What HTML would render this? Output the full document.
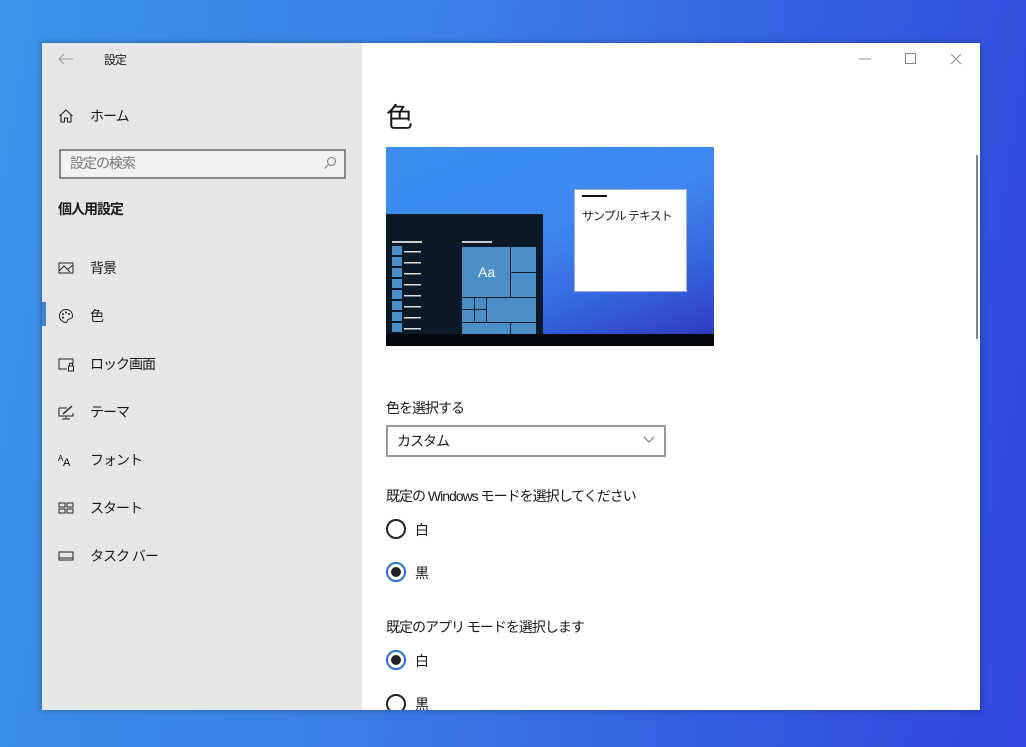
<!DOCTYPE html>
<html><head><meta charset="utf-8"><style>
*{margin:0;padding:0;box-sizing:border-box}
body{width:1026px;height:747px;overflow:hidden;position:relative;font-family:"Liberation Sans","Noto Sans CJK JP",sans-serif;color:#000;
background:linear-gradient(100deg,#3d93ea 0%,#3a80e6 40%,#3560e2 70%,#3048dc 100%)}
.win{position:absolute;left:42px;top:43px;width:938px;height:667px;background:#fff;box-shadow:0 0 6px rgba(0,0,0,.35);overflow:hidden}
.side{position:absolute;left:0;top:0;width:320px;height:667px;background:#e6e6e6}
.t{position:absolute;white-space:nowrap;letter-spacing:-1px;color:#1a1a1a}
.nav{position:absolute;left:16px;font-size:14px;color:#1a1a1a;letter-spacing:-1px}
.nav svg{position:absolute;left:0;top:0}
.nav span{position:absolute;left:32px;top:-2px;white-space:nowrap}
.radio{position:absolute;left:344px;width:20px;height:20px;border:2px solid #222;border-radius:50%}
.radio.on{border-color:#2a73c8}
.radio.on::after{content:"";position:absolute;left:3px;top:3px;width:10px;height:10px;border-radius:50%;background:#222}
</style></head><body>
<div class="win">
 <div class="side">
  <svg style="position:absolute;left:16px;top:10px" width="16" height="12"><path d="M1 6H15M6 1L1 6L6 11" stroke="#999" fill="none" stroke-width="1.1"/></svg>
  <div class="t" style="left:62px;top:8px;font-size:12px">設定</div>
  <div class="nav" style="top:65px"><svg width="16" height="16"><path d="M1.5 8L8 2L14.5 8M3 6.5V14H6.5V10H9.5V14H13V6.5" stroke="#222" fill="none" stroke-width="1.1"/></svg><span>ホーム</span></div>
  <div style="position:absolute;left:17px;top:106px;width:287px;height:30px;border:2px solid #888;background:#f2f2f2"></div>
  <div class="t" style="left:28px;top:110px;font-size:14px;color:#777">設定の検索</div>
  <svg style="position:absolute;left:281px;top:113px" width="14" height="14"><circle cx="8.5" cy="5.5" r="4" stroke="#777" fill="none"/><path d="M5.5 8.5L1.5 12.5" stroke="#777"/></svg>
  <div class="t" style="left:16px;top:156px;font-size:14px;font-weight:bold">個人用設定</div>
  <div class="nav" style="top:217px"><svg width="16" height="16"><rect x="1" y="3" width="14" height="10" stroke="#222" fill="none"/><path d="M1 11L6 6L12 12M10 9L15 5" stroke="#222" fill="none"/></svg><span>背景</span></div>
  <div style="position:absolute;left:0;top:259px;width:4px;height:24px;background:#3f86d0"></div>
  <div class="nav" style="top:265px"><svg width="16" height="16"><path d="M8 1.5C4 1.5 1.5 4.5 1.5 8C1.5 12 5 14.5 8 14.5C9.5 14.5 9 12.5 10 11.5C11 10.5 14.5 11.5 14.5 8C14.5 4.5 12 1.5 8 1.5Z" stroke="#222" fill="none"/><circle cx="5" cy="6" r="1" fill="#222"/><circle cx="8" cy="4.5" r="1" fill="#222"/><circle cx="11" cy="6" r="1" fill="#222"/><circle cx="5" cy="9.5" r="1" fill="#222"/></svg><span>色</span></div>
  <div class="nav" style="top:313px"><svg width="16" height="16"><path d="M9 13H1V3H15V8" stroke="#222" fill="none"/><rect x="10.5" y="10" width="5" height="5" stroke="#222" fill="none"/><path d="M11.5 10V8.5A1.5 1.5 0 0 1 14.5 8.5V10" stroke="#222" fill="none"/></svg><span>ロック画面</span></div>
  <div class="nav" style="top:361px"><svg width="16" height="16"><path d="M1 4H9M1 4V12H15V9M4 15H12M8 12V15" stroke="#222" fill="none"/><path d="M5 10L14 2" stroke="#222" stroke-width="1.5"/></svg><span>テーマ</span></div>
  <div class="nav" style="top:409px"><svg width="16" height="16"><text x="0" y="9" font-size="8" font-family="Liberation Sans">A</text><text x="5" y="14" font-size="11" font-family="Liberation Sans">A</text></svg><span>フォント</span></div>
  <div class="nav" style="top:457px"><svg width="16" height="16"><rect x="1" y="3" width="6" height="4" stroke="#222" fill="none"/><rect x="9" y="3" width="6" height="4" stroke="#222" fill="none"/><rect x="1" y="9" width="6" height="4" stroke="#222" fill="none"/><rect x="9" y="9" width="6" height="4" stroke="#222" fill="none"/></svg><span>スタート</span></div>
  <div class="nav" style="top:505px"><svg width="16" height="16"><rect x="1" y="4" width="14" height="8" stroke="#222" fill="none"/><path d="M1 10H15" stroke="#222"/></svg><span>タスク バー</span></div>
 </div>
 <svg style="position:absolute;left:817px;top:10px" width="110" height="12"><path d="M0 6H12" stroke="#888"/><rect x="46.5" y="0.5" width="10" height="10" stroke="#888" fill="none"/><path d="M92 1L102 11M102 1L92 11" stroke="#888"/></svg>
 <div style="position:absolute;left:934px;top:112px;width:2px;height:184px;background:#858585"></div>
 <div class="t" style="left:344px;top:53px;font-size:27px">色</div>
 <div style="position:absolute;left:344px;top:104px;width:328px;height:199px;overflow:hidden;background:linear-gradient(160deg,#3a8eee 0%,#3f88f0 45%,#3568e0 70%,#2e34c0 100%)">
  <div style="position:absolute;left:188px;top:42px;width:113px;height:103px;background:#fff;border:1px solid #aac"></div>
  <div style="position:absolute;left:196px;top:48px;width:25px;height:2px;background:#111"></div>
  <div class="t" style="left:196px;top:60px;font-size:12px;color:#222">サンプル テキスト</div>
  <div style="position:absolute;left:0;top:67px;width:157px;height:120px;background:#0c1a28">
   <div style="position:absolute;left:6px;top:27px;width:30px;height:2px;background:#ccc"></div>
   <div style="position:absolute;left:6px;top:32px;width:10px;height:88px;background:repeating-linear-gradient(#4a90c8 0 9px,#0c1a28 9px 11px)"></div>
   <div style="position:absolute;left:18px;top:37px;width:17px;height:80px;background:repeating-linear-gradient(#ddd 0 1.5px,transparent 1.5px 11px)"></div>
   <div style="position:absolute;left:76px;top:27px;width:30px;height:2px;background:#ccc"></div>
   <div style="position:absolute;left:76px;top:33px;width:74px;height:87px;background:#4a8fc8"></div>
   <div style="position:absolute;left:124px;top:33px;width:1px;height:50px;background:#0c1a28"></div>
   <div style="position:absolute;left:124px;top:58px;width:26px;height:1px;background:#0c1a28"></div>
   <div style="position:absolute;left:76px;top:83px;width:74px;height:1px;background:#0c1a28"></div>
   <div style="position:absolute;left:88px;top:83px;width:1px;height:25px;background:#0c1a28"></div>
   <div style="position:absolute;left:100px;top:83px;width:1px;height:25px;background:#0c1a28"></div>
   <div style="position:absolute;left:76px;top:95px;width:24px;height:1px;background:#0c1a28"></div>
   <div style="position:absolute;left:76px;top:108px;width:74px;height:1px;background:#0c1a28"></div>
   <div style="position:absolute;left:124px;top:108px;width:1px;height:12px;background:#0c1a28"></div>
   <div class="t" style="left:92px;top:50px;font-size:14px;color:#fff;letter-spacing:0">Aa</div>
  </div>
  <div style="position:absolute;left:0;top:187px;width:328px;height:12px;background:#05080c"></div>
 </div>
 <div class="t" style="left:344px;top:355px;font-size:14px">色を選択する</div>
 <div style="position:absolute;left:344px;top:382px;width:280px;height:32px;border:2px solid #999"></div>
 <div class="t" style="left:355px;top:388px;font-size:14px">カスタム</div>
 <svg style="position:absolute;left:601px;top:393px" width="12" height="8"><path d="M1 1L6 6L11 1" stroke="#666" fill="none"/></svg>
 <div class="t" style="left:344px;top:443px;font-size:14px">既定の Windows モードを選択してください</div>
 <div class="radio" style="top:476px"></div><div class="t" style="left:373px;top:477px;font-size:14px">白</div>
 <div class="radio on" style="top:519px"></div><div class="t" style="left:373px;top:520px;font-size:14px">黒</div>
 <div class="t" style="left:344px;top:574px;font-size:14px">既定のアプリ モードを選択します</div>
 <div class="radio on" style="top:607px"></div><div class="t" style="left:373px;top:608px;font-size:14px">白</div>
 <div class="radio" style="top:651px"></div><div class="t" style="left:373px;top:651px;font-size:14px">黒</div>
</div>
</body></html>
